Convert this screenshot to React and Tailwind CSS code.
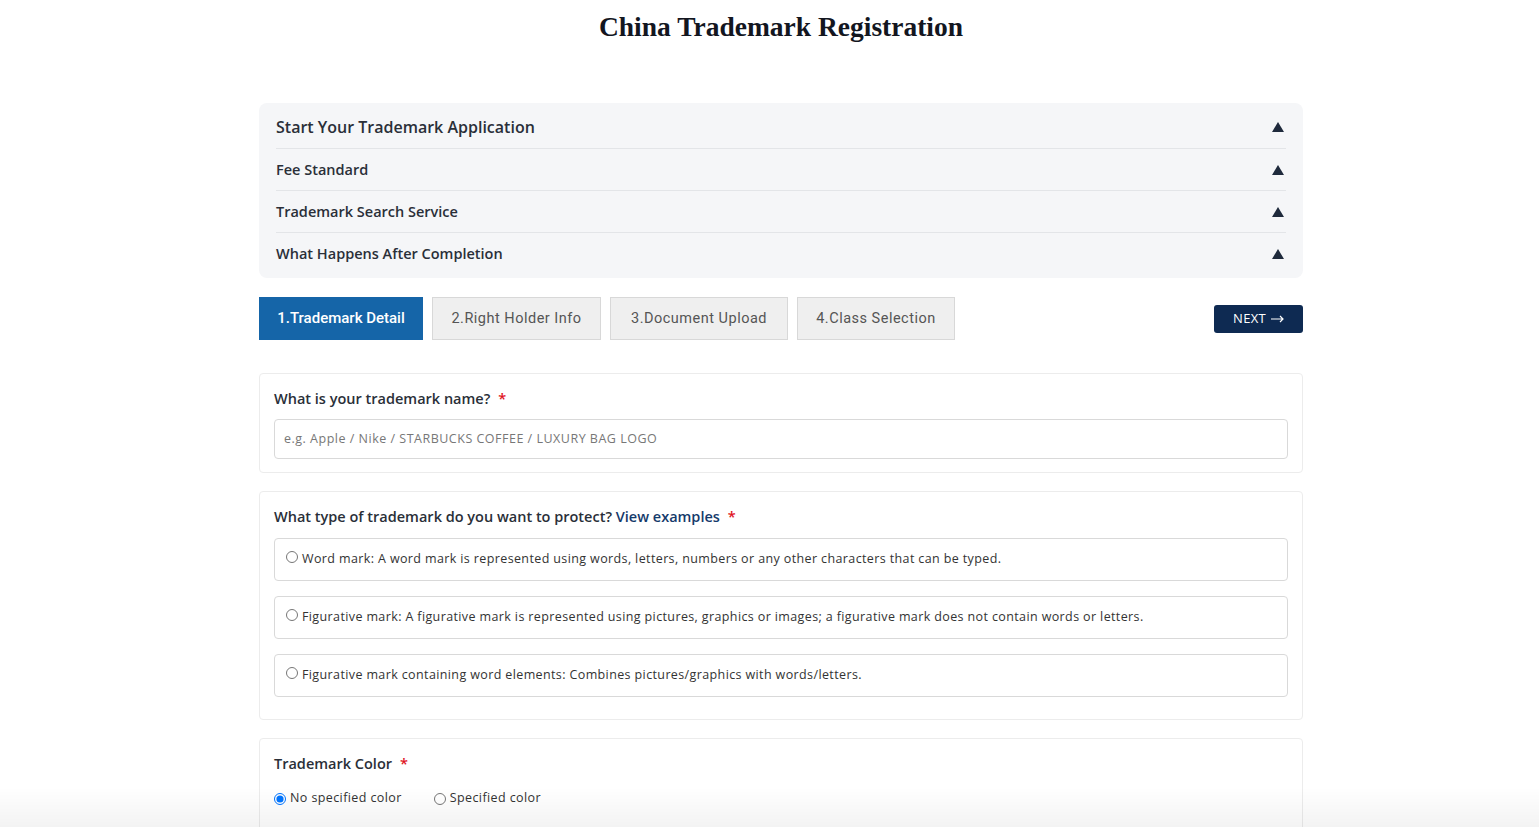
import React from 'react';

const sans = { fontFamily: '"Open Sans", "Liberation Sans", sans-serif' };

function Triangle() {
  return (
    <svg width="12" height="10" viewBox="0 0 12 10" className="shrink-0">
      <path d="M6 0 L12 10 L0 10 Z" fill="#1f2a3c" />
    </svg>
  );
}

function Star() {
  return <span className="ml-2 text-[#e0141e]">*</span>;
}

export default function App() {
  const faq = [
    'Start Your Trademark Application',
    'Fee Standard',
    'Trademark Search Service',
    'What Happens After Completion',
  ];
  const rowH = [
    'h-[46px] pt-[3px] text-[16px]',
    'h-[42px] text-[14.5px]',
    'h-[42px] text-[14.5px]',
    'h-[45px] pb-[3px] text-[14.5px]',
  ];
  const tabs = ['2.Right Holder Info', '3.Document Upload', '4.Class Selection'];
  const options = [
    'Word mark: A word mark is represented using words, letters, numbers or any other characters that can be typed.',
    'Figurative mark: A figurative mark is represented using pictures, graphics or images; a figurative mark does not contain words or letters.',
    'Figurative mark containing word elements: Combines pictures/graphics with words/letters.',
  ];

  return (
    <div className="min-h-screen bg-white text-[#222]" style={sans}>
      <div className="ml-[259px] w-[1044px] pb-10">
        {/* Title */}
        <h1
          className="pt-[9px] text-center text-[27.5px] font-bold leading-[36px] text-[#13161f]"
          style={{ fontFamily: '"Liberation Serif", "DejaVu Serif", serif' }}
        >
          China Trademark Registration
        </h1>

        {/* Accordion */}
        <div className="mt-[58px] rounded-lg bg-[#f5f6f8] px-[17px]">
          {faq.map((q, i) => (
            <div
              key={q}
              className={`flex items-center justify-between ${rowH[i]} ${i < faq.length - 1 ? 'border-b border-[#e3e5e8]' : ''} font-semibold text-[#2a2f38]`}
            >
              <span>{q}</span>
              <span className="mr-[2px]">
                <Triangle />
              </span>
            </div>
          ))}
        </div>

        {/* Steps */}
        <div className="mt-[19px] flex items-center justify-between">
          <div className="flex gap-[9px]" style={{ fontFamily: 'Roboto, "Liberation Sans", sans-serif' }}>
            <div className="flex h-[43px] w-[164px] items-center justify-center bg-[#1565a8] text-[15px] font-medium text-white">
              1.Trademark Detail
            </div>
            {tabs.map((t, i) => (
              <div
                key={t}
                className={`flex h-[43px] items-center justify-center border border-[#d8d8d8] bg-[#efefef] text-[14.5px] tracking-[0.5px] text-[#555] ${i === 0 ? 'w-[169px]' : i === 1 ? 'w-[178px]' : 'w-[158px]'}`}
              >
                {t}
              </div>
            ))}
          </div>
          <button className="flex h-[28px] w-[89px] items-center justify-center gap-[5px] rounded-[3px] bg-[#0e2a52] text-[13px] tracking-[0.3px] text-white">
            NEXT
            <svg width="13" height="8" viewBox="0 0 13 8" fill="none" stroke="white" strokeWidth="1.2">
              <path d="M0 4 H12 M9 1 L12 4 L9 7" />
            </svg>
          </button>
        </div>

        {/* Trademark name */}
        <div className="mt-[33px] rounded border border-[#ececec] px-[14px] pb-[13px] pt-[14px]">
          <div className="text-[14.5px] font-semibold text-[#2a2f38]">
            What is your trademark name?
            <Star />
          </div>
          <input
            className="mt-[9px] h-[40px] w-full rounded border border-[#d9d9d9] px-[9px] text-[12.5px] tracking-[0.5px] outline-none placeholder:text-[#777]"
            placeholder="e.g. Apple / Nike / STARBUCKS COFFEE / LUXURY BAG LOGO"
          />
        </div>

        {/* Trademark type */}
        <div className="mt-[18px] rounded border border-[#ececec] px-[14px] pb-[22px] pt-[14px]">
          <div className="text-[14.5px] font-semibold text-[#2a2f38]">
            What type of trademark do you want to protect?{' '}
            <span className="text-[#153a6b]">View examples</span>
            <Star />
          </div>
          <div className="mt-[10px] flex flex-col gap-[15px]">
            {options.map((o) => (
              <label
                key={o}
                className="flex h-[43px] items-center gap-[4px] rounded border border-[#d9d9d9] px-[11px] text-[12.5px] tracking-[0.38px] text-[#333]"
              >
                <input type="radio" name="type" className="m-0 h-[12px] w-[12px] -translate-y-[2px]" />
                <span>{o}</span>
              </label>
            ))}
          </div>
        </div>

        {/* Colour */}
        <div className="mt-[18px] rounded border border-[#ececec] px-[14px] pb-[20px] pt-[14px]">
          <div className="text-[14.5px] font-semibold text-[#2a2f38]">
            Trademark Color
            <Star />
          </div>
          <div className="mt-[15px] flex items-center gap-[32px] text-[12.5px] tracking-[0.4px] text-[#333]">
            <label className="flex items-center gap-[4px]">
              <input type="radio" name="color" defaultChecked className="m-0 h-[12px] w-[12px]" />
              No specified color
            </label>
            <label className="flex items-center gap-[4px]">
              <input type="radio" name="color" className="m-0 h-[12px] w-[12px]" />
              Specified color
            </label>
          </div>
          <div className="h-[60px]" />
        </div>
      </div>

      {/* bottom fade */}
      <div className="pointer-events-none fixed bottom-0 left-0 right-0 h-[40px] bg-gradient-to-b from-transparent to-[#0000000c]" />
    </div>
  );
}
